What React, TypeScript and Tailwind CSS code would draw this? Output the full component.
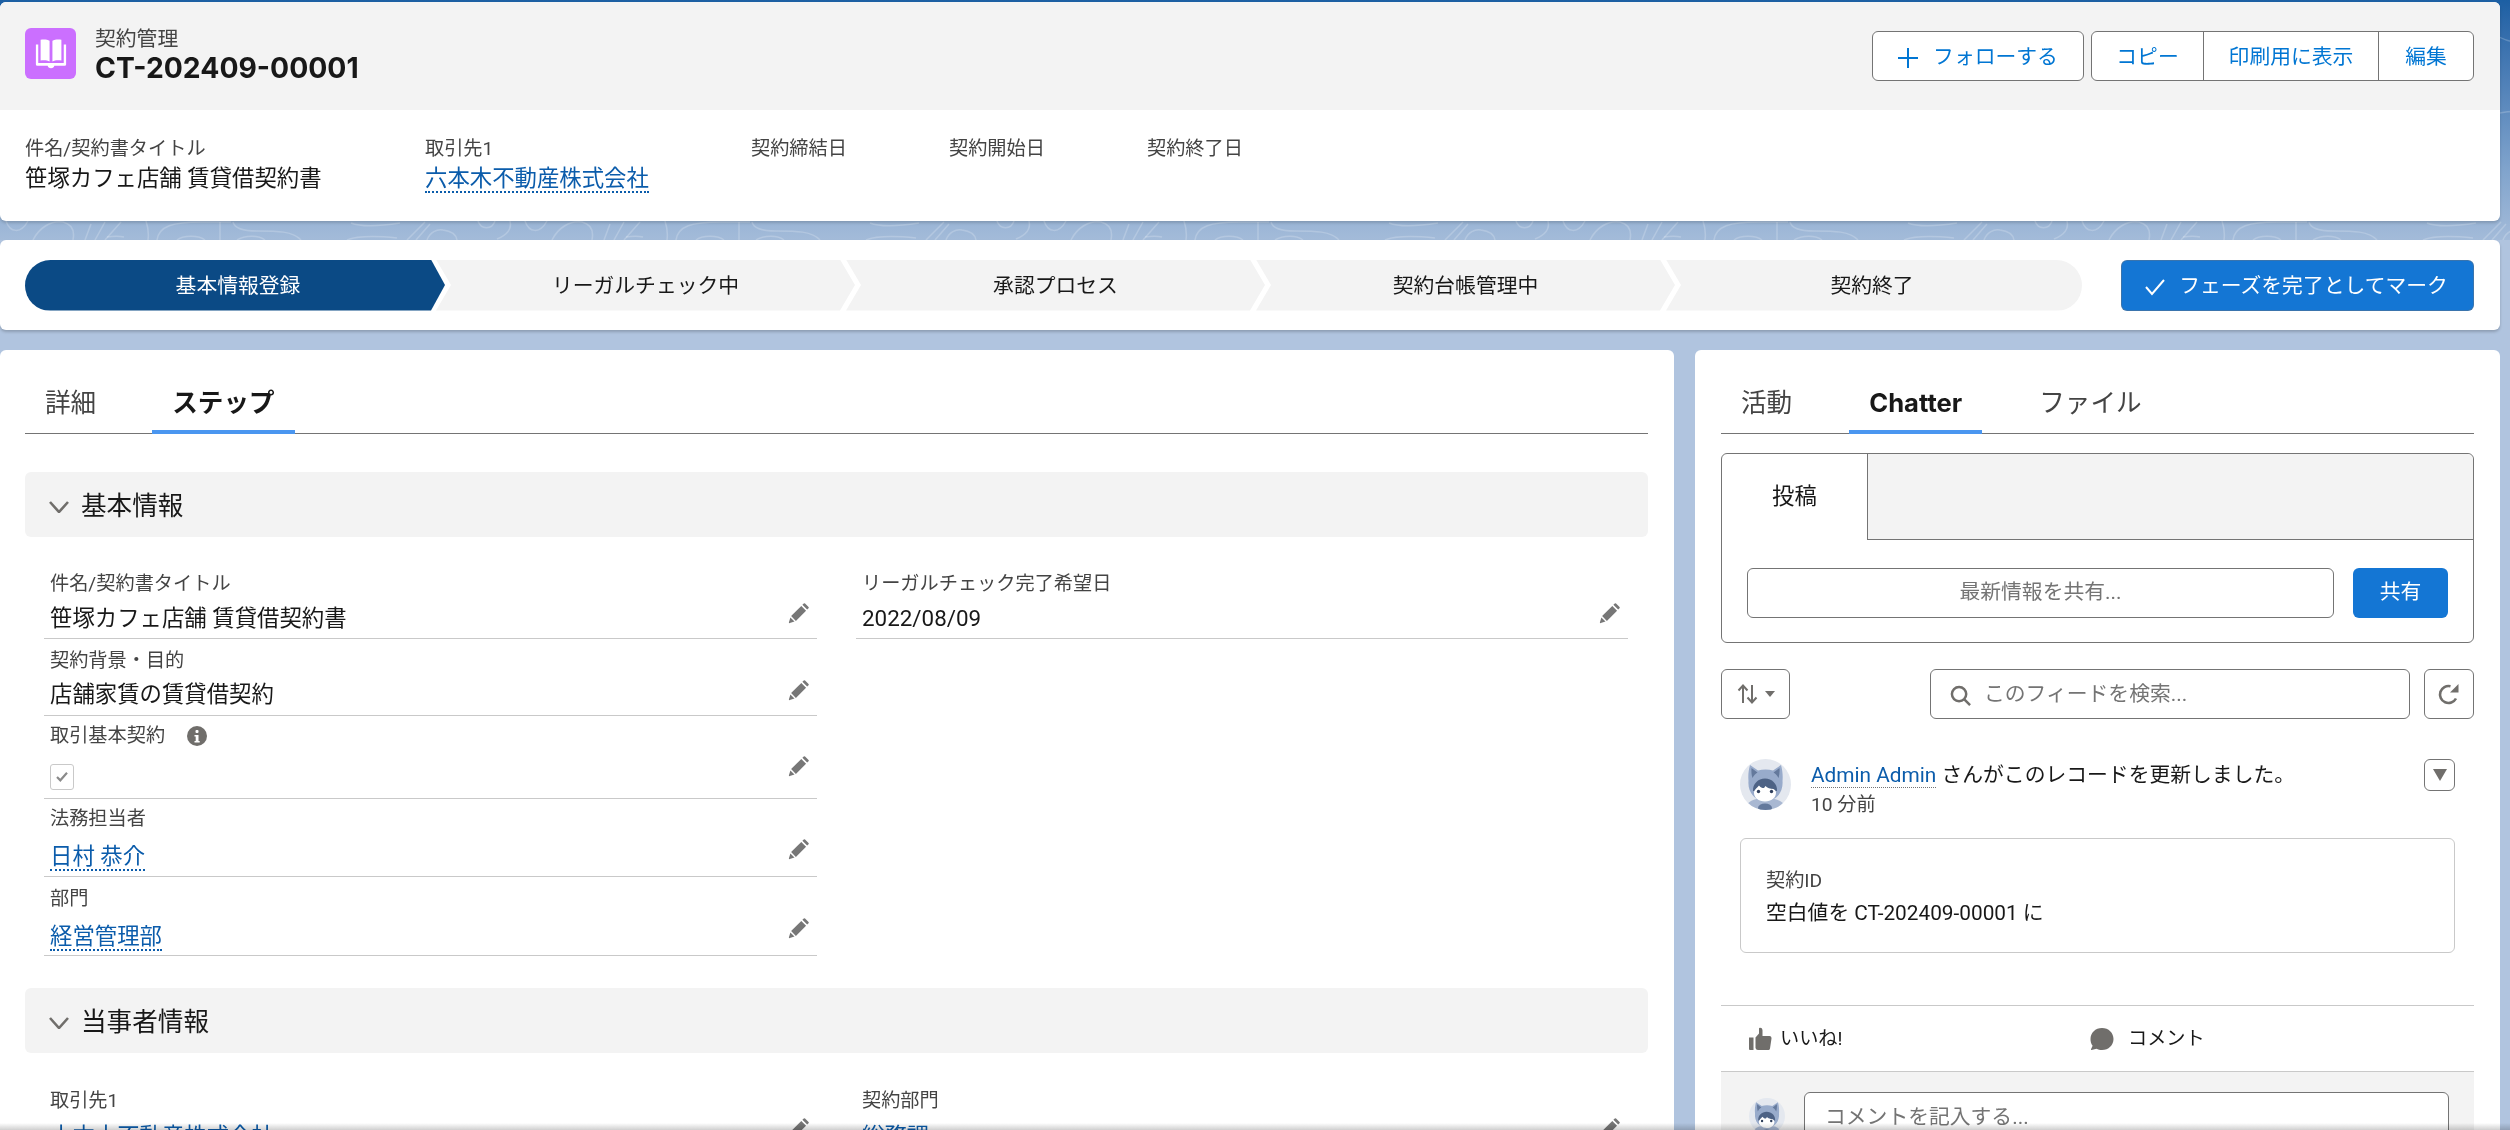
import React from "react";

const Pencil = () => (
  <svg viewBox="0 0 24 24" className="h-[22px] w-[22px] shrink-0 fill-[#777777]">
    <path d="M17.2 1.6a1 1 0 0 1 1.4 0l3.8 3.8a1 1 0 0 1 0 1.4l-1.5 1.5-5.2-5.2zM14.5 4.3l5.2 5.2L8.6 20.6l-5.2-5.2zM2.6 16.9l4.5 4.5-5.2 1.6a.7.7 0 0 1-.9-.9z" />
  </svg>
);

const Chevron = () => (
  <svg viewBox="0 0 20 12" className="h-[12px] w-[20px] shrink-0 fill-none stroke-[#706e6b] stroke-[2.6]">
    <path d="M1 1l9 10 9-10" />
  </svg>
);

const Avatar = ({ className }: { className: string }) => (
  <svg viewBox="0 0 51 51" className={className}>
    <defs>
      <clipPath id="avatar-clip">
        <circle cx="25.5" cy="25.5" r="25.5" />
      </clipPath>
    </defs>
    <g clipPath="url(#avatar-clip)">
      <rect width="51" height="51" fill="#e4e8ef" />
      <path d="M5 51c1-8 8-12 20.500-12S45 43 46 51z" fill="#a9b8d2" />
      <path d="M10 6l8 5.500c4.500-1.500 10.500-1.500 15 0L41 6c1.500 5 2 11 1.500 16 1 11-6 20-17 20s-18-9-17-20C8 17 8.500 11 10 6z" fill="#98abcb" />
      <path d="M11.500 9l6 4.500c-2 1.300-3.700 3-5 5.500-1-3-1.300-6.500-1-10zM39.500 9l-6 4.500c2 1.300 3.700 3 5 5.500 1-3 1.300-6.500 1-10z" fill="#64799c" />
      <path d="M13 32c-.5-7 5-12.500 12-12.500S37.500 25 37 32z" fill="#4d6285" />
      <path d="M14 33c.5-2.500 3-4 5-6.500 1.500 2 3 2.500 5 2.500l1.500-2c1.500 2 5 3 8 3 1.500 1 2.500 2 2.500 3.500 0 5.500-4.500 9-11 9S13.500 38.500 14 33z" fill="#fff" />
      <circle cx="18.500" cy="32.500" r="1.700" fill="#2f3f5c" />
      <circle cx="31.500" cy="32.500" r="1.700" fill="#2f3f5c" />
      <ellipse cx="25" cy="49" rx="7" ry="4.500" fill="#64799c" />
    </g>
  </svg>
);

const Field = ({
  label,
  value,
  link,
  rowClass,
  valueClass,
  pencilClass,
  children,
}: {
  label: React.ReactNode;
  value?: string;
  link?: boolean;
  rowClass: string;
  valueClass?: string;
  pencilClass: string;
  children?: React.ReactNode;
}) => (
  <div className={"flex justify-between border-b border-[#c9c9c9] pl-[6px] pr-[7px] " + rowClass}>
    <div>
      <div className="flex items-center text-[19.2px] leading-[28px] text-[#444444]">{label}</div>
      {value && (
        <div className={"text-[22.4px] leading-[32px] " + (valueClass ?? "mt-[7px]")}>
          {link ? (
            <span className="border-b-2 border-dotted border-[#0b5cab] text-[#0b5cab]">{value}</span>
          ) : (
            <span className="text-[#181818]">{value}</span>
          )}
        </div>
      )}
      {children}
    </div>
    <div className={pencilClass}>
      <Pencil />
    </div>
  </div>
);

const Section = ({ title }: { title: string }) => (
  <div className="flex h-[65px] items-center gap-[12px] rounded-[6px] bg-[#f3f3f3] pl-[24px] pt-[4px]">
    <Chevron />
    <span className="text-[25.6px] leading-none text-[#181818]">{title}</span>
  </div>
);

const Tab = ({ label, active }: { label: string; active?: boolean }) => (
  <div
    className={
      "-mb-px px-[20px] pb-[9px] text-[25.6px] leading-[36px] " +
      (active
        ? "border-b-[4px] border-[#4a96f0] font-bold text-[#181818] [font-family:'Inter','Noto_Sans_CJK_JP',sans-serif]"
        : "border-b-[4px] border-transparent text-[#444444]")
    }
  >
    {label}
  </div>
);

const steps = ["リーガルチェック中", "承認プロセス", "契約台帳管理中"];

export default function App() {
  return (
    <div className="relative h-[1130px] w-[2510px] overflow-hidden bg-[#b0c4df] [font-family:'Roboto','Noto_Sans_CJK_JP',sans-serif]">
      {/* background picture behind the top cards */}
      <div className="absolute inset-x-0 top-0 h-[240px] bg-gradient-to-b from-[#1c5fa3] via-[#7fa3cc] via-70% to-[#a3bbd9]">
        <svg className="h-full w-full fill-none" xmlns="http://www.w3.org/2000/svg">
          <defs>
            <pattern id="topo" x="400" width="519" height="240" patternUnits="userSpaceOnUse">
              <g className="stroke-white/20 stroke-[1.5]">
                <path d="M7 240l18-18M16 240l14-16" />
                <path d="M27 240c3-8 10-11 16-10 8 1 13 4 14 10" />
                <path d="M78 221c3 9 14 9 17 0" />
                <path d="M110 221c2 8-3 14-13 18" />
                <path d="M125 221c4 12 15 13 22 0" />
                <path d="M152 240c6-12 18-20 30-18 8 2 12 8 10 18" />
                <path d="M204 240l6-16M214 240l10-18M224 240l16-18" />
                <path d="M226 237c6-1 13-1 17 0" />
                <path d="M265 221c2 6 3 12 2 19" />
                <path d="M276 240c2-14 16-18 44-18h30" />
                <path d="M339 222v18" />
                <path d="M296 240c6-5 22-5 28 0" />
                <path d="M352 222c2 8 14 9 24 9 20 0 36 0 44 9" />
                <path d="M356 240c8-5 22-5 28 0" />
                <path d="M470 223c10 4 30 3 49 0M466 240c10-4 30-4 50-2" />
                <path d="M10 30c60 40 110-20 170 30s120 10 190-20 100 20 149 0M0 120c70-30 120 30 190 0s130 30 200 0 90 10 129 0" />
              </g>
            </pattern>
          </defs>
          <rect width="100%" height="100%" fill="url(#topo)" />
        </svg>
      </div>

      <div className="relative flex h-full w-[2500px] flex-col pt-[2px]">
        {/* record header */}
        <div className="overflow-hidden rounded-[6px] bg-white shadow-[0_2px_3px_rgba(0,0,0,0.16)]">
          <div className="flex h-[108px] items-start justify-between bg-[#f3f3f3] pl-[25px] pr-[26px]">
            <div className="flex items-start gap-[19px] pt-[26px]">
              <div className="flex h-[51px] w-[51px] items-center justify-center rounded-[6px] bg-[#cb6fff]">
                <svg viewBox="0 0 36 32" className="h-[32px] w-[34px] fill-white">
                  <path d="M7 1c3-.8 7-.5 9.500 1v22c-2.500-1.500-6.500-1.800-9.500-1zM19.500 2c2.500-1.500 6.500-1.800 9.500-1v22c-3-.8-7-.5-9.500 1z" />
                  <path d="M2 6h2.500v19.500h27V6H34v21a1.500 1.500 0 0 1-1.500 1.500H21.500c-.2 1.500-1.500 2.500-3.500 2.500s-3.300-1-3.500-2.500h-11A1.500 1.500 0 0 1 2 27z" />
                </svg>
              </div>
              <div className="-mt-[2px]">
                <div className="text-[20.8px] leading-[26px] text-[#444444]">契約管理</div>
                <div className="text-[28.3px] font-bold leading-[32px] text-[#181818] [font-family:'Inter',sans-serif]">CT-202409-00001</div>
              </div>
            </div>
            <div className="flex gap-[7px] pt-[29px] text-[20.8px] text-[#0176d3]">
              <div className="flex h-[50px] w-[212px] items-center justify-center gap-[15px] rounded-[6px] border border-[#747474] bg-white pt-[4px]">
                <svg viewBox="0 0 20 20" className="h-[20px] w-[20px] fill-none stroke-[#0176d3] stroke-[2]">
                  <path d="M10 0v20M0 10h20" />
                </svg>
                <span>フォローする</span>
              </div>
              <div className="flex h-[50px] w-[383px] divide-x divide-[#747474] rounded-[6px] border border-[#747474] bg-white">
                <div className="flex w-[112px] items-center justify-center pt-[4px]">コピー</div>
                <div className="flex w-[175px] items-center justify-center pt-[4px]">印刷用に表示</div>
                <div className="flex flex-1 items-center justify-center pt-[4px]">編集</div>
              </div>
            </div>
          </div>
          <div className="flex h-[111px] pl-[25px] pt-[25px]">
            <div className="w-[400px]">
              <div className="text-[19.2px] leading-[27px] text-[#444444]">件名/契約書タイトル</div>
              <div className="text-[22.4px] leading-[32px] text-[#181818]">笹塚カフェ店舗 賃貸借契約書</div>
            </div>
            <div className="w-[326px]">
              <div className="text-[19.2px] leading-[27px] text-[#444444]">取引先1</div>
              <div className="text-[22.4px] leading-[32px]">
                <span className="border-b-2 border-dotted border-[#0b5cab] text-[#0b5cab]">六本木不動産株式会社</span>
              </div>
            </div>
            <div className="w-[198px] text-[19.2px] leading-[27px] text-[#444444]">契約締結日</div>
            <div className="w-[198px] text-[19.2px] leading-[27px] text-[#444444]">契約開始日</div>
            <div className="w-[198px] text-[19.2px] leading-[27px] text-[#444444]">契約終了日</div>
          </div>
        </div>

        {/* path */}
        <div className="mt-[19px] flex h-[90px] shrink-0 items-center justify-between rounded-[6px] bg-white pl-[25px] pr-[26px] shadow-[0_2px_3px_rgba(0,0,0,0.2)]">
          <div className="flex text-[20.8px] text-[#181818]">
            <div className="flex h-[51px] w-[420px] items-center justify-center rounded-l-[26px] bg-[#0b4a85] pl-[6px] pt-[4px] text-white [clip-path:polygon(0_0,406px_0,100%_50%,406px_100%,0_100%)]">
              基本情報登録
            </div>
            {steps.map((s) => (
              <div
                key={s}
                className="-ml-[9px] flex h-[51px] w-[419px] items-center justify-center bg-[#f3f3f3] pt-[4px] [clip-path:polygon(0_0,404px_0,100%_50%,404px_100%,0_100%,15px_50%)]"
              >
                {s}
              </div>
            ))}
            <div className="-ml-[9px] flex h-[51px] w-[416px] items-center justify-center rounded-r-[26px] bg-[#f3f3f3] pr-[4px] pt-[4px] [clip-path:polygon(0_0,100%_0,100%_100%,0_100%,15px_50%)]">
              契約終了
            </div>
          </div>
          <div className="flex h-[51px] w-[353px] items-center justify-center gap-[14px] rounded-[6px] border border-[#747474]/40 bg-[#1476d4] pr-[2px] pt-[4px] text-[20.8px] text-white">
            <svg viewBox="0 0 20 18" className="h-[18px] w-[20px] fill-none stroke-white stroke-[2]">
              <path d="M1 9l6 7L19 2" />
            </svg>
            <span>フェーズを完了としてマーク</span>
          </div>
        </div>

        {/* main columns */}
        <div className="mt-[20px] flex min-h-0 flex-1 gap-[21px]">
          <div className="h-[900px] w-[1674px] shrink-0 rounded-t-[6px] bg-white px-[26px] pl-[25px]">
            <div className="flex h-[84px] items-end gap-[36px] border-b border-[#747474]">
              <Tab label="詳細" />
              <Tab label="ステップ" active />
            </div>
            <div className="mt-[38px]">
              <Section title="基本情報" />
            </div>
            <div className="mt-[24px] grid grid-cols-[773px_772px] gap-x-[39px] pl-[19px]">
              <div>
                <Field label="件名/契約書タイトル" value="笹塚カフェ店舗 賃貸借契約書" rowClass="h-[78px] pt-[9px]" valueClass="mt-[4px]" pencilClass="pt-[32px]" />
                <Field label="契約背景・目的" value="店舗家賃の賃貸借契約" rowClass="h-[77px] pt-[8px]" valueClass="mt-[3px]" pencilClass="pt-[32px]" />
                <Field
                  label={
                    <>
                      取引基本契約
                      <svg viewBox="0 0 20 20" className="ml-[22px] h-[20px] w-[20px]">
                        <circle cx="10" cy="10" r="10" fill="#706e6b" />
                        <rect x="8.500" y="4" width="3" height="3" rx="1" fill="#fff" />
                        <path d="M7.500 9h4v6h1.200v1.500H7.500V15h1.200v-4.500H7.500z" fill="#fff" />
                      </svg>
                    </>
                  }
                  rowClass="h-[83px] pt-[6px]"
                  pencilClass="pt-[33px]"
                >
                  <div className="mt-[14px] flex h-[26px] w-[24px] items-center justify-center rounded-[3px] border border-[#c9c9c9]">
                    <svg viewBox="0 0 14 12" className="h-[10px] w-[12px] fill-none stroke-[#8a8a8a] stroke-[2.6]">
                      <path d="M1 6l4 4 8-9" />
                    </svg>
                  </div>
                </Field>
                <Field label="法務担当者" value="日村 恭介" link rowClass="h-[78px] pt-[6px]" pencilClass="pt-[33px]" />
                <Field label="部門" value="経営管理部" link rowClass="h-[79px] pt-[8px]" pencilClass="pt-[32px]" />
              </div>
              <div>
                <Field label="リーガルチェック完了希望日" value="2022/08/09" rowClass="h-[78px] pt-[9px]" valueClass="mt-[4px]" pencilClass="pt-[32px]" />
              </div>
            </div>
            <div className="mt-[32px]">
              <Section title="当事者情報" />
            </div>
            <div className="mt-[24px] grid grid-cols-[773px_772px] gap-x-[39px] pl-[19px]">
              <Field label="取引先1" value="六本木不動産株式会社" link rowClass="h-[78px] pt-[10px]" valueClass="mt-[5px]" pencilClass="pt-[30px]" />
              <Field label="契約部門" value="総務課" link rowClass="h-[78px] pt-[10px]" valueClass="mt-[5px]" pencilClass="pt-[30px]" />
            </div>
          </div>

          {/* chatter */}
          <div className="h-[900px] flex-1 rounded-t-[6px] bg-white px-[26px]">
            <div className="flex h-[84px] items-end gap-[37px] border-b border-[#747474]">
              <Tab label="活動" />
              <Tab label="Chatter" active />
              <Tab label="ファイル" />
            </div>
            <div className="mt-[19px] h-[190px] rounded-[6px] border border-[#747474]">
              <div className="flex h-[86px]">
                <div className="flex w-[146px] items-center justify-center border-r border-[#747474] text-[22.4px] text-[#181818]">投稿</div>
                <div className="flex-1 rounded-tr-[6px] border-b border-[#747474] bg-[#f3f3f3]" />
              </div>
              <div className="flex gap-[19px] px-[25px] pt-[28px]">
                <div className="flex h-[50px] flex-1 items-center justify-center rounded-[6px] border border-[#747474] text-[20.8px] text-[#747474]">
                  最新情報を共有...
                </div>
                <div className="flex h-[50px] w-[95px] items-center justify-center rounded-[6px] bg-[#1476d4] text-[20.8px] text-white">共有</div>
              </div>
            </div>
            <div className="mt-[26px] flex h-[50px] text-[#747474]">
              <div className="flex w-[69px] items-center justify-center gap-[6px] rounded-[6px] border border-[#747474]">
                <svg viewBox="0 0 22 22" className="h-[22px] w-[22px] fill-none stroke-[#706e6b] stroke-[2]">
                  <path d="M6 20V3M1.500 7.500L6 2.500l4.500 5M15 2v17M10.500 14.500l4.500 5 4.500-5" />
                </svg>
                <svg viewBox="0 0 10 6" className="h-[6px] w-[10px] fill-[#706e6b]">
                  <path d="M0 0h10L5 6z" />
                </svg>
              </div>
              <div className="ml-[140px] flex w-[480px] items-center gap-[13px] rounded-[6px] border border-[#747474] pl-[19px] pt-[2px] text-[20.8px]">
                <svg viewBox="0 0 22 22" className="h-[21px] w-[21px] fill-none stroke-[#706e6b] stroke-[2.6]">
                  <circle cx="9.500" cy="9.500" r="7.500" />
                  <path d="M15 15l6 6" />
                </svg>
                <span>このフィードを検索...</span>
              </div>
              <div className="ml-[14px] flex w-[50px] items-center justify-center rounded-[6px] border border-[#747474]">
                <svg viewBox="0 0 22 22" className="h-[22px] w-[22px]">
                  <path d="M18 15.500A8.500 8.500 0 1 1 12.500 3.200" className="fill-none stroke-[#706e6b] stroke-[2.6]" />
                  <path d="M20.500 1v8.500H12z" className="fill-[#706e6b]" />
                </svg>
              </div>
            </div>

            <div className="h-[286px] px-[19px] pt-[40px]">
              <div className="flex">
                <Avatar className="h-[51px] w-[51px] shrink-0" />
                <div className="ml-[20px] flex-1">
                  <div className="text-[20.8px] leading-[32px] text-[#181818]">
                    <span className="border-b border-dotted border-[#747474] text-[#0b5cab]">Admin Admin</span> さんがこのレコードを更新しました。
                  </div>
                  <div className="text-[19.2px] leading-[28px] text-[#444444]">10 分前</div>
                </div>
                <div className="flex h-[32px] w-[31px] items-center justify-center rounded-[6px] border border-[#747474]">
                  <svg viewBox="0 0 14 12" className="h-[12px] w-[14px] fill-[#706e6b]">
                    <path d="M0 0h14L7 12z" />
                  </svg>
                </div>
              </div>
              <div className="mt-[19px] h-[115px] rounded-[6px] border border-[#c9c9c9] pl-[25px] pt-[28px]">
                <div className="text-[19.2px] leading-[28px] text-[#444444]">契約ID</div>
                <div className="mt-[3px] text-[20.8px] leading-[30px] text-[#181818]">空白値を CT-202409-00001 に</div>
              </div>
            </div>

            <div className="flex h-[67px] items-center border-y border-[#c9c9c9] pt-[2px] text-[19.2px] text-[#181818]">
              <div className="flex w-[369px] items-center gap-[8px] pl-[27px]">
                <svg viewBox="0 0 24 24" className="h-[24px] w-[24px] fill-[#706e6b]">
                  <path d="M1 10.500h4.500V23H2a1 1 0 0 1-1-1zM7.500 10.500l3.500-4V1.500c0-1 3.500-1.500 3.500 2V9h7c1.500 0 2 1 2 2.500l-1.500 10c-.2 1-1 1.500-2 1.500H10a2.500 2.500 0 0 1-2.500-2z" />
                </svg>
                <span>いいね!</span>
              </div>
              <div className="flex items-center gap-[14px]">
                <svg viewBox="0 0 24 24" className="h-[24px] w-[24px] fill-[#706e6b]">
                  <path d="M12 1c6.600 0 11.500 4.800 11.500 11S18.600 23 12 23c-2 0-4-.4-5.500-1.200L1.500 23c-.5 0-.7-.3-.5-.7l1.600-3.600C1 16.700.500 14.500.500 12 .500 5.800 5.400 1 12 1z" />
                </svg>
                <span>コメント</span>
              </div>
            </div>
            <div className="flex h-[80px] items-start bg-[#f3f3f3] pl-[28px] pr-[25px] pt-[20px]">
              <Avatar className="mt-[6px] h-[36px] w-[36px] shrink-0" />
              <div className="ml-[19px] flex h-[50px] flex-1 items-center rounded-t-[6px] border border-[#747474] bg-white pl-[20px] pt-[2px] text-[20.8px] text-[#747474]">
                コメントを記入する...
              </div>
            </div>
          </div>
        </div>
      </div>

      {/* page fade at the bottom edge */}
      <div className="absolute inset-x-0 bottom-0 h-[7px] bg-gradient-to-b from-transparent to-[#cfcfcf] mix-blend-multiply" />
    </div>
  );
}
